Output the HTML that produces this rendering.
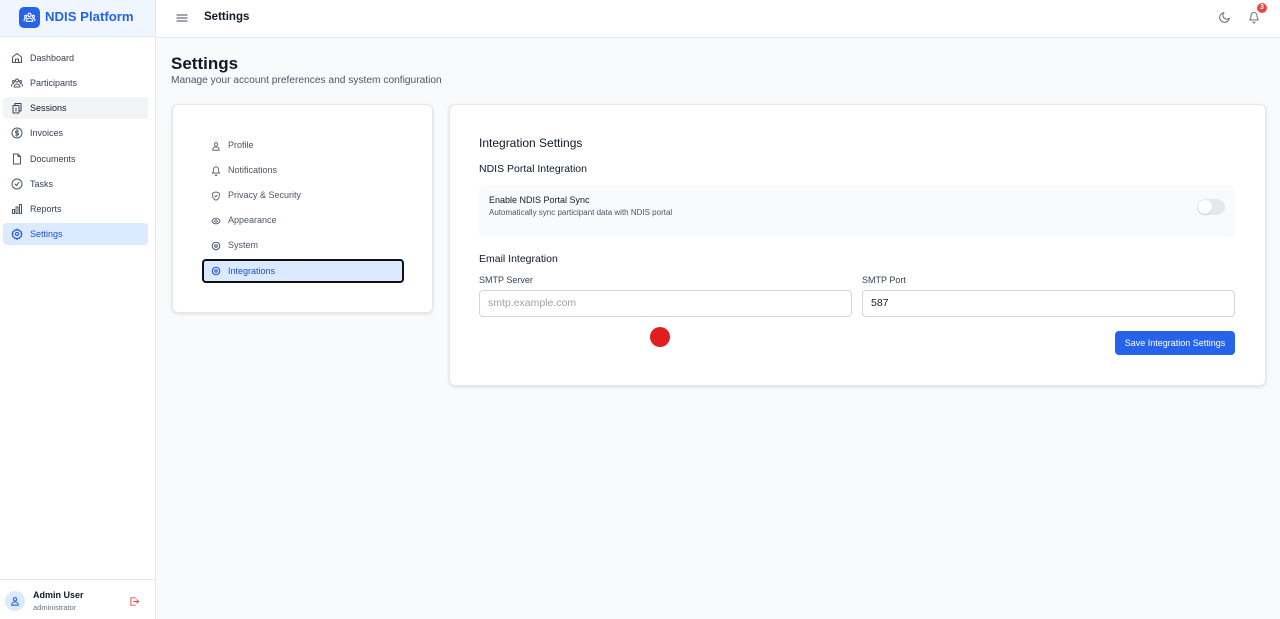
<!DOCTYPE html>
<html><head><meta charset="utf-8"><style>
*{box-sizing:border-box;margin:0;padding:0}
body{width:1280px;height:619px;overflow:hidden;font-family:"Liberation Sans",sans-serif;background:#f9fafb;position:relative;color:#111827}
.abs{position:absolute}
.sb{left:0;top:0;width:156px;height:619px;background:#fff;border-right:1px solid #e5e7eb}
.logo{left:0;top:0;width:155px;height:37px;background:#eff6ff;border-bottom:1px solid #e5e7eb}
.nav{position:absolute;left:3px;width:145px;height:22px;border-radius:4px;font-size:9px;color:#374151;line-height:22px;padding-left:27px}
.nav svg{position:absolute;left:8px;top:5px}
.top{left:156px;top:0;width:1124px;height:38px;background:#fff;border-bottom:1px solid #e5e7eb}
.card{background:#fff;border:1px solid #e5e7eb;border-radius:6px;box-shadow:0 1px 3px rgba(0,0,0,.12)}
.li{position:absolute;left:30px;width:200px;height:23px;font-size:9px;color:#4b5563;line-height:23px;padding-left:25px}
.li svg{position:absolute;left:8px;top:7px}
.inp{position:absolute;height:27px;border:1px solid #d1d5db;border-radius:4px;background:#fff;font-size:10.5px;line-height:25px;padding-left:8px}
svg{fill:none;stroke-linecap:round;stroke-linejoin:round}
</style></head><body>
<div class="abs sb"></div>
<div class="abs logo">
 <div class="abs" style="left:19px;top:7px;width:21px;height:21px;background:#2563eb;border-radius:5px"></div>
 <svg class="abs" style="left:23px;top:11px" width="13" height="13" viewBox="0 0 24 24" stroke="#fff" stroke-width="2"><circle cx="12" cy="7" r="3"/><circle cx="5" cy="10" r="2"/><circle cx="19" cy="10" r="2"/><path d="M6 19c0-4 3-6 6-6s6 2 6 6zM2 18c0-2 1-4 3-4M22 18c0-2-1-4-3-4"/></svg>
 <div class="abs" style="left:45px;top:9px;font-size:13.2px;font-weight:bold;color:#2563eb">NDIS Platform</div>
</div>
<div class="nav" style="top:47px"><svg width="12" height="12" viewBox="0 0 24 24" stroke="#4b5563" stroke-width="2"><path d="M3 10l9-7 9 7v11H3zM9 21v-7h6v7"/></svg>Dashboard</div>
<div class="nav" style="top:72px"><svg width="12" height="12" viewBox="0 0 24 24" stroke="#4b5563" stroke-width="2"><circle cx="12" cy="7" r="3"/><circle cx="5" cy="9" r="2"/><circle cx="19" cy="9" r="2"/><path d="M6 20c0-4 3-6 6-6s6 2 6 6zM1 18c0-3 2-5 4-5M23 18c0-3-2-5-4-5"/></svg>Participants</div>
<div class="nav" style="top:97px;background:#f3f4f6;color:#111827"><svg width="12" height="12" viewBox="0 0 24 24" stroke="#374151" stroke-width="2"><rect x="4" y="7" width="12" height="15" rx="1"/><path d="M8 7V3h12v15h-4M10 12v6"/></svg>Sessions</div>
<div class="nav" style="top:122px"><svg width="12" height="12" viewBox="0 0 24 24" stroke="#4b5563" stroke-width="2"><circle cx="12" cy="12" r="10"/><path d="M15 8h-4a2 2 0 000 4h2a2 2 0 010 4H9M12 5v14"/></svg>Invoices</div>
<div class="nav" style="top:148px"><svg width="12" height="12" viewBox="0 0 24 24" stroke="#4b5563" stroke-width="2"><path d="M14 2H5v20h14V7zM14 2v5h5"/></svg>Documents</div>
<div class="nav" style="top:173px"><svg width="12" height="12" viewBox="0 0 24 24" stroke="#4b5563" stroke-width="2"><circle cx="12" cy="12" r="10"/><path d="M8 12l3 3 5-6"/></svg>Tasks</div>
<div class="nav" style="top:198px"><svg width="12" height="12" viewBox="0 0 24 24" stroke="#4b5563" stroke-width="2"><rect x="3" y="13" width="4" height="8"/><rect x="10" y="8" width="4" height="13"/><rect x="17" y="3" width="4" height="18"/></svg>Reports</div>
<div class="nav" style="top:223px;background:#dbeafe;color:#1d4ed8"><svg width="12" height="12" viewBox="0 0 24 24" stroke="#1d4ed8" stroke-width="2"><circle cx="12" cy="12" r="3"/><path d="M12 2l2 3 3-1 1 3 3 1-1 3 2 1-2 2 1 3-3 1-1 3-3-1-2 3-2-3-3 1-1-3-3-1 1-3-2-2 2-1-1-3 3-1 1-3 3 1z"/></svg>Settings</div>
<div class="abs" style="left:0;top:579px;width:155px;border-top:1px solid #e5e7eb"></div>
<div class="abs" style="left:5px;top:591px;width:20px;height:20px;border-radius:50%;background:#dbeafe"></div>
<svg class="abs" style="left:10px;top:596px" width="10" height="10" viewBox="0 0 24 24" stroke="#2563eb" stroke-width="2.5"><circle cx="12" cy="8" r="4"/><path d="M4 22c0-5 4-8 8-8s8 3 8 8z"/></svg>
<div class="abs" style="left:33px;top:590px;font-size:9px;font-weight:bold;color:#111827">Admin User</div>
<div class="abs" style="left:33px;top:603px;font-size:7.5px;color:#6b7280">administrator</div>
<svg class="abs" style="left:129px;top:596px" width="11" height="11" viewBox="0 0 24 24" stroke="#ef4444" stroke-width="2"><path d="M14 4H4v16h10M10 12h11M17 8l4 4-4 4"/></svg>

<div class="abs top">
 <svg class="abs" style="left:20px;top:13px" width="12" height="10" viewBox="0 0 12 10" stroke="#6b7280" stroke-width="1.2"><path d="M1 2h10M1 5h10M1 8h10"/></svg>
 <div class="abs" style="left:48px;top:11px;font-size:11.5px;font-weight:bold">Settings</div>
 <svg class="abs" style="left:1062px;top:11px" width="13" height="13" viewBox="0 0 24 24" stroke="#6b7280" stroke-width="2"><path d="M21 13A9 9 0 1111 3a7 7 0 0010 10z"/></svg>
 <svg class="abs" style="left:1092px;top:11px" width="12" height="13" viewBox="0 0 24 24" stroke="#6b7280" stroke-width="2"><path d="M6 8a6 6 0 0112 0c0 7 3 9 3 9H3s3-2 3-9M10 21a2 2 0 004 0"/></svg>
 <div class="abs" style="left:1101px;top:3px;width:10px;height:10px;border-radius:50%;background:#ef4444;color:#fff;font-size:7px;font-weight:bold;text-align:center;line-height:10px">3</div>
</div>

<div class="abs" style="left:171px;top:54px;font-size:17px;font-weight:bold">Settings</div>
<div class="abs" style="left:171px;top:75px;font-size:10.2px;color:#4b5563">Manage your account preferences and system configuration</div>

<div class="abs card" style="left:172px;top:104px;width:261px;height:209px">
 <div class="li" style="top:29px"><svg width="10" height="10" viewBox="0 0 24 24" stroke="#4b5563" stroke-width="2"><circle cx="12" cy="8" r="4"/><path d="M4 22c0-5 4-8 8-8s8 3 8 8z"/></svg>Profile</div>
 <div class="li" style="top:54px"><svg width="10" height="10" viewBox="0 0 24 24" stroke="#4b5563" stroke-width="2"><path d="M6 8a6 6 0 0112 0c0 7 3 9 3 9H3s3-2 3-9M10 21a2 2 0 004 0"/></svg>Notifications</div>
 <div class="li" style="top:79px"><svg width="10" height="10" viewBox="0 0 24 24" stroke="#4b5563" stroke-width="2"><path d="M12 2l8 3v7c0 5-4 9-8 10-4-1-8-5-8-10V5zM9 12l2 2 4-4"/></svg>Privacy &amp; Security</div>
 <div class="li" style="top:104px"><svg width="10" height="10" viewBox="0 0 24 24" stroke="#4b5563" stroke-width="2"><path d="M2 12s4-7 10-7 10 7 10 7-4 7-10 7S2 12 2 12z"/><circle cx="12" cy="12" r="3"/></svg>Appearance</div>
 <div class="li" style="top:129px"><svg width="10" height="10" viewBox="0 0 24 24" stroke="#4b5563" stroke-width="2.5"><circle cx="12" cy="12" r="9"/><circle cx="12" cy="12" r="3"/></svg>System</div>
 <div class="li" style="top:154px;left:29px;width:202px;height:24px;border:2px solid #111;border-radius:4px;background:#dbeafe;color:#1d4ed8;line-height:20px;padding-left:24px"><svg width="10" height="10" viewBox="0 0 24 24" stroke="#1d4ed8" stroke-width="2.5" style="left:7px;top:5px"><circle cx="12" cy="12" r="9"/><circle cx="12" cy="12" r="3"/></svg>Integrations</div>
</div>

<div class="abs card" style="left:449px;top:104px;width:817px;height:282px"></div>
<div class="abs" style="left:479px;top:136px;font-size:12px;color:#111827">Integration Settings</div>
<div class="abs" style="left:479px;top:163px;font-size:10.5px;color:#111827">NDIS Portal Integration</div>
<div class="abs" style="left:479px;top:185px;width:756px;height:52px;background:#f9fafb;border-radius:5px"></div>
<div class="abs" style="left:489px;top:195px;font-size:9px;color:#111827">Enable NDIS Portal Sync</div>
<div class="abs" style="left:489px;top:208px;font-size:8px;color:#4b5563">Automatically sync participant data with NDIS portal</div>
<div class="abs" style="left:1197px;top:199px;width:28px;height:16px;border-radius:8px;background:#e5e7eb"></div>
<div class="abs" style="left:1198px;top:200px;width:14px;height:14px;border-radius:50%;background:#fff;box-shadow:0 1px 1px rgba(0,0,0,.15)"></div>
<div class="abs" style="left:479px;top:253px;font-size:10.5px;color:#111827">Email Integration</div>
<div class="abs" style="left:479px;top:275px;font-size:9px;color:#374151">SMTP Server</div>
<div class="abs" style="left:862px;top:275px;font-size:9px;color:#374151">SMTP Port</div>
<div class="inp" style="left:479px;top:290px;width:373px;color:#9ca3af">smtp.example.com</div>
<div class="inp" style="left:862px;top:290px;width:373px;color:#111827">587</div>
<div class="abs" style="left:1115px;top:331px;width:120px;height:24px;background:#2563eb;border-radius:4px;color:#fff;font-size:9px;text-align:center;line-height:24px">Save Integration Settings</div>
<div class="abs" style="left:650px;top:327px;width:20px;height:20px;border-radius:50%;background:#e11d1d"></div>
</body></html>
